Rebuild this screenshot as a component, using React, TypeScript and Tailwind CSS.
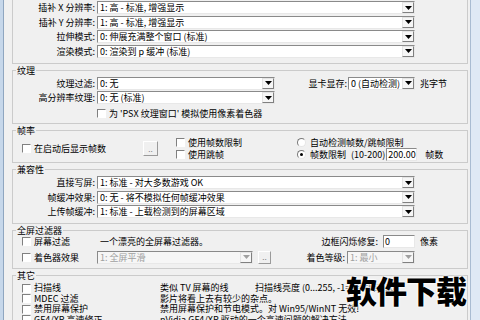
import clsx from 'clsx'
import type { ReactNode } from 'react'

function Check({ label, className }: { label?: string; className?: string }) {
  return (
    <div className={clsx('flex items-center', className)}>
      <span className="h-[9px] w-[9px] shrink-0 border border-b-white border-l-[#808080] border-r-white border-t-[#808080] bg-white" />
      {label && <span className="ml-[3px] whitespace-nowrap">{label}</span>}
    </div>
  )
}

function Radio({ label, on, children }: { label: string; on?: boolean; children?: ReactNode }) {
  return (
    <div className="flex h-[12px] items-center">
      <span className="flex h-[9px] w-[9px] shrink-0 items-center justify-center rounded-full border border-b-[#e6e6e6] border-l-[#7a7a7a] border-r-[#e6e6e6] border-t-[#7a7a7a] bg-white">
        {on && <span className="h-[3px] w-[3px] rounded-full bg-black" />}
      </span>
      <span className="ml-[4px] whitespace-nowrap">{label}</span>
      {children}
    </div>
  )
}

function Select({ value, className, disabled }: { value: string; className: string; disabled?: boolean }) {
  return (
    <div
      className={clsx(
        'flex h-[13px] shrink-0 items-stretch border border-b-[#e8e8e8] border-l-[#8a8a8a] border-r-[#e8e8e8] border-t-[#8a8a8a]',
        disabled ? 'bg-[#f6f6f6] text-[#a0a0a0]' : 'bg-white',
        className,
      )}
    >
      <span className="flex-1 overflow-hidden whitespace-nowrap pl-[2px] leading-[11px]">{value}</span>
      <span className="flex w-[12px] items-center justify-center border border-b-[#808080] border-l-[#e4e4e4] border-r-[#808080] border-t-[#e4e4e4] bg-[#f6f6f6]">
        <svg width="7" height="4" viewBox="0 0 7 4">
          <path d="M0 0h7L3.5 4z" fill={disabled ? '#a0a0a0' : '#000'} />
        </svg>
      </span>
    </div>
  )
}

function Edit({ value, className }: { value: string; className: string }) {
  return (
    <div
      className={clsx(
        'h-[13px] shrink-0 border border-b-[#e8e8e8] border-l-[#8a8a8a] border-r-[#e8e8e8] border-t-[#8a8a8a] bg-white pl-[1px] leading-[11px]',
        className,
      )}
    >
      {value}
    </div>
  )
}

function Dots({ className }: { className?: string }) {
  return (
    <div
      className={clsx(
        'flex shrink-0 items-end justify-center border border-b-[#9a9a9a] border-l-white border-r-[#9a9a9a] border-t-white bg-[#f0f0f0] pb-[2px] text-[8px] leading-[8px] text-[#808080]',
        className,
      )}
    >
      ..
    </div>
  )
}

function Group({ title, className, children }: { title: string; className?: string; children: ReactNode }) {
  return (
    <fieldset className={clsx('border border-[#cbcbcb]', className)}>
      <legend className="ml-[3px] px-[1px] leading-[11px]">{title}</legend>
      {children}
    </fieldset>
  )
}

function Row({ label, children }: { label: string; children: ReactNode }) {
  return (
    <div className="flex h-[13px] items-center">
      <span className="w-[84px] shrink-0 whitespace-nowrap pr-[2px] text-right">{label}</span>
      {children}
    </div>
  )
}

const misc = [
  ['扫描线', '类似 TV 屏幕的线'],
  ['MDEC 过滤', '影片将看上去有较少的杂点。'],
  ['禁用屏幕保护', '禁用屏幕保护和节电模式。对 Win95/WinNT 无效!'],
  ['GF4/XP 高速修正', 'nVidia GF4/XP 驱动的一个高速问题的解决方法。'],
]

export default function App() {
  return (
    <div className="relative flex h-[320px] w-[480px] overflow-hidden bg-[#f0f0f0] font-['Noto_Sans_CJK_SC',sans-serif] text-[9px] leading-[11px] text-black">
      <div className="w-[3px] shrink-0 bg-[#c6d7ea]" />
      <div className="w-[1px] shrink-0 bg-[#8fa6c0]" />

      <div className="flex w-[466px] shrink-0 flex-col gap-[1px] pl-[8px] pr-[2px]">
        <Group title="分辨率" className="-mt-[15px] pb-[5px] pt-[5px]">
          <div className="flex flex-col gap-[1.5px]">
            <Row label="插补 X 分辨率:">
              <Select value="1: 高 - 标准, 增强显示" className="w-[318px]" />
            </Row>
            <Row label="插补 Y 分辨率:">
              <Select value="1: 高 - 标准, 增强显示" className="w-[318px]" />
            </Row>
            <Row label="拉伸模式:">
              <Select value="0: 伸展充满整个窗口 (标准)" className="w-[318px]" />
            </Row>
            <Row label="渲染模式:">
              <Select value="0: 渲染到 p 缓冲 (标准)" className="w-[318px]" />
            </Row>
          </div>
        </Group>

        <Group title="纹理" className="pb-[3px] pt-[1px]">
          <div className="flex flex-col gap-[1.5px]">
            <Row label="纹理过滤:">
              <Select value="0: 无" className="w-[178px]" />
              <span className="ml-[28px] w-[45px] shrink-0 whitespace-nowrap pr-[1px] text-right">显卡显存:</span>
              <Select value="0 (自动检测)" className="w-[67px]" />
              <span className="ml-[5px]">兆字节</span>
            </Row>
            <Row label="高分辨率纹理:">
              <Select value="0: 无 (标准)" className="w-[178px]" />
            </Row>
          </div>
          <Check label="为 'PSX 纹理窗口' 模拟使用像素着色器" className="mt-[3px] h-[13px] pl-[84px]" />
        </Group>

        <Group title="帧率" className="pb-[2px]">
          <div className="flex items-center pl-[9px]">
            <Check label="在启动后显示帧数" className="w-[121px]" />
            <Dots className="h-[15px] w-[15px]" />
            <div className="ml-[18px] flex w-[121px] flex-col">
              <Check label="使用帧数限制" className="h-[12px]" />
              <Check label="使用跳帧" className="h-[12px]" />
            </div>
            <div className="flex flex-col">
              <Radio label="自动检测帧数/跳帧限制" />
              <Radio label="帧数限制" on>
                <span className="ml-[5px] whitespace-nowrap">(10-200)</span>
                <Edit value="200.00" className="ml-[1px] w-[31px]" />
                <span className="ml-[8px]">帧数</span>
              </Radio>
            </div>
          </div>
        </Group>

        <Group title="兼容性" className="pb-[5px] pt-[1px]">
          <div className="flex flex-col gap-[1.5px]">
            <Row label="直接写屏:">
              <Select value="1: 标准 - 对大多数游戏 OK" className="w-[318px]" />
            </Row>
            <Row label="帧缓冲效果:">
              <Select value="0: 无 - 将不模拟任何帧缓冲效果" className="w-[318px]" />
            </Row>
            <Row label="上传帧缓冲:">
              <Select value="1: 标准 - 上载检测到的屏幕区域" className="w-[318px]" />
            </Row>
          </div>
        </Group>

        <Group title="全屏过滤器" className="pb-[4px]">
          <div className="-mt-[1px] flex h-[13px] items-center pl-[9px]">
            <Check label="屏幕过滤" className="w-[78px]" />
            <span className="whitespace-nowrap">一个漂亮的全屏幕过滤器。</span>
            <span className="ml-auto whitespace-nowrap pr-[5px]">边框闪烁修复:</span>
            <Edit value="0" className="w-[32px]" />
            <span className="ml-[5px] w-[47px]">像素</span>
          </div>
          <div className="mt-[2px] flex h-[14px] items-center pl-[9px]">
            <Check label="着色器效果" className="w-[75px]" />
            <Select value="1: 全屏平滑" disabled className="w-[156px]" />
            <Dots className="ml-[5px] h-[13px] w-[13px]" />
            <span className="ml-[30px] w-[46px] whitespace-nowrap pr-[2px] text-right">着色等级:</span>
            <Select value="1: 最小" disabled className="w-[68px]" />
          </div>
        </Group>

        <Group title="其它" className="pt-[2px]">
          {misc.map(([name, desc], i) => (
            <div key={name} className="flex h-[10.5px] items-center pl-[9px] leading-[10px]">
              <Check label={name} className="w-[138px]" />
              <span className={clsx('whitespace-nowrap', i === 0 && 'w-[95px]')}>{desc}</span>
              {i === 0 && <span className="whitespace-nowrap">扫描线亮度 (0...255, -1=特殊降): 10</span>}
            </div>
          ))}
        </Group>
      </div>

      <div className="w-[1px] shrink-0 bg-[#a9bcd2]" />
      <div className="flex-1 bg-[#dfe9f5]" />

      <div className="absolute left-[346px] top-[274px] whitespace-nowrap text-[31px] font-black leading-none tracking-[-1px] [text-shadow:0_0_2px_#fff,0_0_2px_#fff,0_0_3px_#fff]">
        软件下载
      </div>
    </div>
  )
}
